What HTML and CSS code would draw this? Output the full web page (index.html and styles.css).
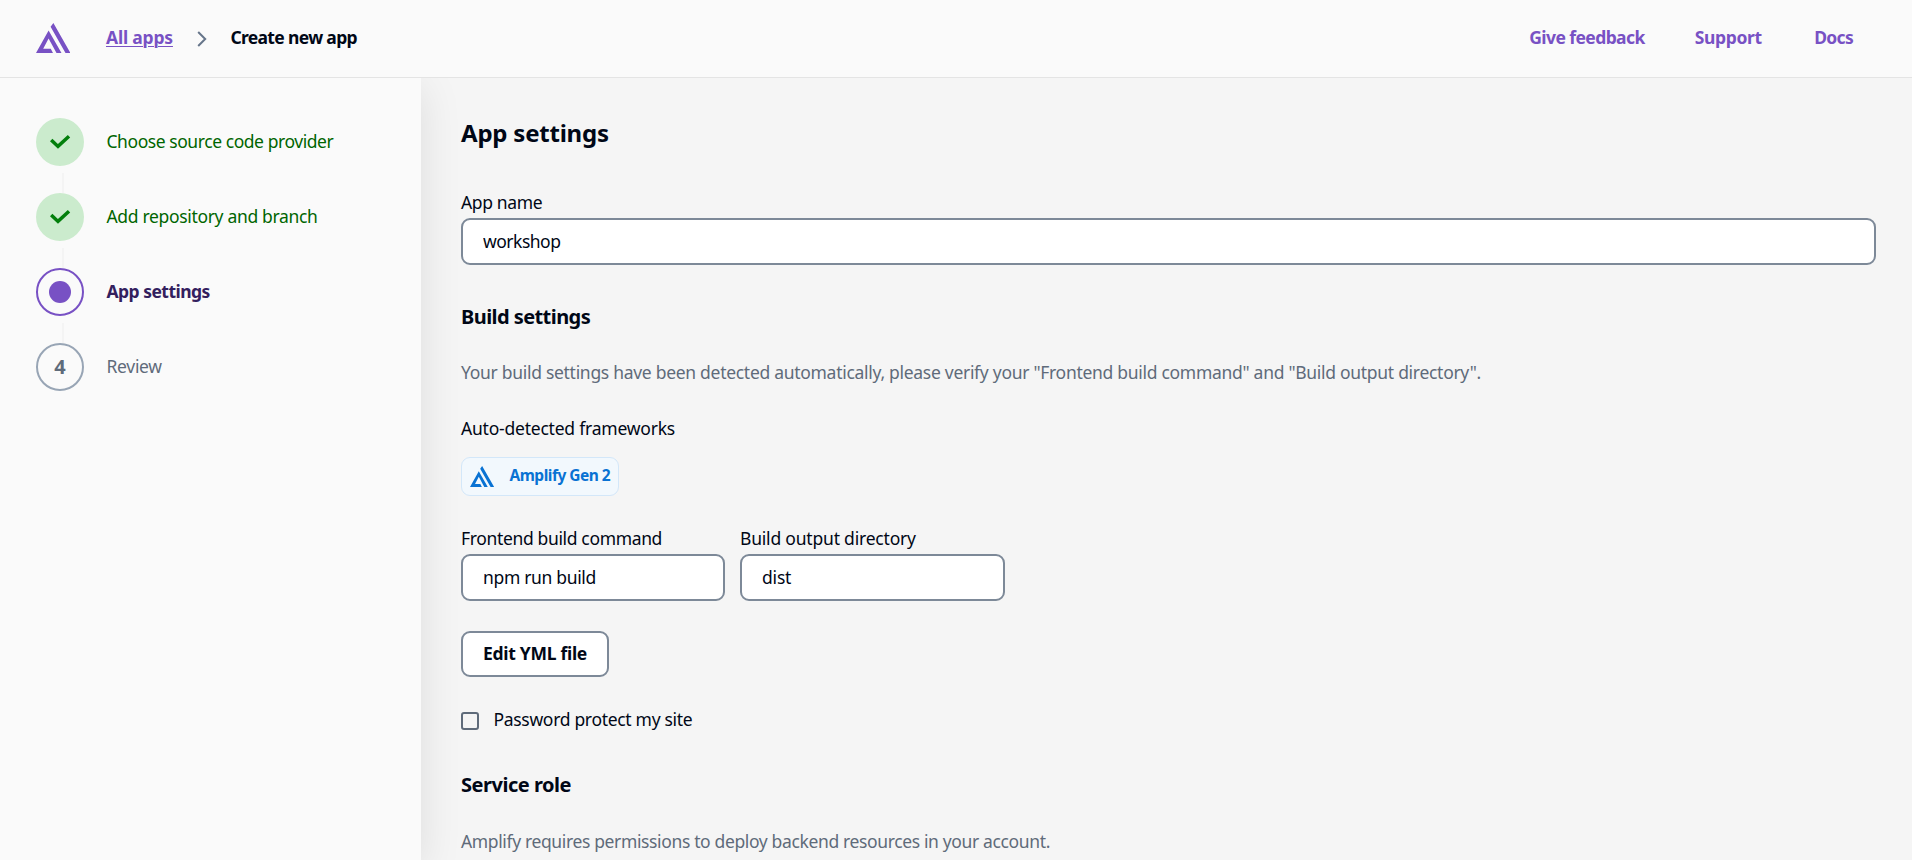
FILE: index.html
```html
<!DOCTYPE html>
<html lang="en">
<head>
<meta charset="utf-8">
<title>Create new app</title>
<link rel="stylesheet" href="styles.css">
</head>
<body>
<svg class="defs" aria-hidden="true">
  <symbol id="logo" viewBox="0 0 34.4 30">
    <path d="M17.4 0L34.5 30h-5L14.6 3.8zM12.6 7.6L25.5 30h-5L12.6 15.5 7.2 25.8h7.6L17 30H0z"/>
  </symbol>
</svg>
<header class="topbar">
  <svg class="topbar-logo"><use href="#logo"/></svg>
  <nav class="crumbs">
    <a class="crumb-link t-link">All apps</a>
    <svg class="chevron" viewBox="0 0 10 16"><path d="M1.2 1l7 7-7 7"/></svg>
    <span class="crumb-current">Create new app</span>
  </nav>
  <nav class="toplinks">
    <a class="toplink t-feedback">Give feedback</a>
    <a class="toplink t-support">Support</a>
    <a class="toplink t-docs">Docs</a>
  </nav>
</header>
<div class="layout">
  <aside class="sidebar">
    <ol class="steps">
      <li class="step done"><span class="badge"><svg class="check" viewBox="0 0 20 14"><path d="M1.2 5l6.8 6.4L19 1.3"/></svg></span><span class="step-label t-choose">Choose source code provider</span></li>
      <li class="step done"><span class="badge"><svg class="check" viewBox="0 0 20 14"><path d="M1.2 5l6.8 6.4L19 1.3"/></svg></span><span class="step-label t-repo">Add repository and branch</span></li>
      <li class="step current"><span class="badge"><span class="dot"></span></span><span class="step-label t-current">App settings</span></li>
      <li class="step todo"><span class="badge">4</span><span class="step-label t-review">Review</span></li>
    </ol>
  </aside>
  <main class="main">
    <h1 class="title">App settings</h1>
    <div class="field field-name">
      <label class="label t-name" for="name">App name</label>
      <input class="input t-workshop" id="name" value="workshop">
    </div>
    <h2 class="section t-build">Build settings</h2>
    <p class="hint t-hint">Your build settings have been detected automatically, please verify your "Frontend build command" and "Build output directory".</p>
    <div class="label t-auto">Auto-detected frameworks</div>
    <div class="chip"><svg class="chip-logo"><use href="#logo"/></svg><span>Amplify Gen 2</span></div>
    <div class="row">
      <div class="field">
        <label class="label t-front" for="cmd">Frontend build command</label>
        <input class="input t-npm" id="cmd" value="npm run build">
      </div>
      <div class="field">
        <label class="label t-out" for="dir">Build output directory</label>
        <input class="input t-out" id="dir" value="dist">
      </div>
    </div>
    <button class="button">Edit YML file</button>
    <label class="checkline"><span class="box"></span><span>Password protect my site</span></label>
    <h2 class="section t-role">Service role</h2>
    <p class="hint t-perm">Amplify requires permissions to deploy backend resources in your account.</p>
  </main>
</div>
</body>
</html>
```
FILE: styles.css
```css
* { box-sizing: border-box; }
body {
  margin: 0;
  height: 860px;
  overflow: hidden;
  display: flex;
  flex-direction: column;
  background: #f5f5f5;
  color: #000716;
  font: 400 17.5px/27px "Noto Sans", "Open Sans", sans-serif;
  white-space: nowrap;
}
h1, h2, p, ol { margin: 0; padding: 0; }
.defs { position: absolute; width: 0; height: 0; }

.topbar {
  position: relative;
  z-index: 1;
  flex: none;
  height: 78px;
  padding: 0 59px 3px 36px;
  display: flex;
  align-items: center;
  background: #fafafa;
  border-bottom: 1px solid #e4e4e4;
  font-weight: 700;
}
.topbar-logo { width: 34.4px; height: 30px; margin: 2px 35.6px 0 0; fill: #7851c4; }
.crumbs { display: flex; align-items: center; }
.crumb-link {
  width: 67px;
  color: #7851c4;
  text-decoration: underline;
  text-decoration-thickness: 1px;
  text-underline-offset: 2px;
}
.chevron { width: 10px; height: 16px; margin: 3px 23px 0 24.4px; fill: none; stroke: #66758a; stroke-width: 2; }
.crumb-current { letter-spacing: -0.66px; }
.toplinks { margin-left: auto; display: flex; color: #7851c4; }
.toplink { margin-left: 50px; }

.layout { flex: 1; min-height: 0; display: flex; }
.sidebar {
  flex: none;
  width: 421px;
  padding: 40px 36px;
  background: #fafafa;
  box-shadow: 0 9px 40px rgba(0, 0, 0, .1);
}
.steps { list-style: none; display: flex; flex-direction: column; gap: 27px; }
.step { position: relative; display: flex; align-items: center; gap: 22.5px; }
.step:not(:last-child)::after {
  content: "";
  position: absolute;
  left: 26px;
  top: 55px;
  width: 2px;
  height: 20px;
  background: #f4f4f4;
}
.step-label { padding-bottom: 2px; }
.badge {
  width: 48px;
  height: 48px;
  display: flex;
  align-items: center;
  justify-content: center;
  border-radius: 50%;
  font-size: 20px;
  font-weight: 700;
}
.done { color: #006500; }
.done .badge { background: #cbebcd; }
.check { width: 20px; height: 14px; overflow: visible; fill: none; stroke: #037f0c; stroke-width: 3.5; }
.current { color: #33205e; font-weight: 700; }
.current .badge { border: 2px solid #7851c4; }
.dot { width: 22px; height: 22px; border-radius: 50%; background: #7851c4; }
.todo { color: #5f6b7a; }
.todo .badge { border: 2px solid #98a5b5; padding-bottom: 2px; }

.main { flex: 1; padding: 39px 36px 0 40px; display: flex; flex-direction: column; align-items: flex-start; }
.title { font-size: 24px; line-height: 32px; letter-spacing: -0.22px; }
.field { display: flex; flex-direction: column; }
.field-name { align-self: stretch; margin-top: 40px; }
.label { height: 29px; line-height: 27px; }
.input {
  width: 100%;
  height: 47px;
  padding: 0 20px 2px;
  border: 2px solid #7d8998;
  border-radius: 9px;
  background: #fff;
  color: #000716;
  font: inherit;
}
.section { margin-top: 37px; font-size: 20px; line-height: 30px; }
.hint { margin-top: 27px; color: #5f6b7a; }
.t-auto { margin-top: 29px; }
.chip {
  height: 39px;
  width: 158px;
  margin-top: 13px;
  padding: 0 0 2px 8px;
  display: flex;
  align-items: center;
  gap: 15.5px;
  border: 1px solid #d3e7f9;
  border-radius: 9px;
  background: #f2f8fd;
  color: #0972d3;
  font-size: 15.5px;
  font-weight: 700;
  letter-spacing: -0.5px;
}
.chip-logo { width: 24px; height: 21px; margin-top: 2px; fill: #0972d3; }
.row { margin-top: 29px; display: grid; grid-template-columns: 264px 265px; gap: 15px; }
.button {
  width: 148px;
  height: 46px;
  margin-top: 30px;
  padding: 0 0 2px;
  border: 2px solid #7d8998;
  border-radius: 9px;
  background: #fff;
  color: #000716;
  font: inherit;
  font-weight: 700;
  letter-spacing: -0.28px;
}
.checkline { margin-top: 29px; display: flex; align-items: center; gap: 14.5px; letter-spacing: -0.31px; }
.box { width: 18px; height: 18px; margin-top: 2px; border: 2px solid #5f6b7a; border-radius: 3px; }
.t-role { margin-top: 37px; }
.t-perm { margin-top: 28px; }

.t-link { letter-spacing: -0.19px; }
.t-feedback { letter-spacing: -0.58px; }
.t-support { letter-spacing: -0.36px; }
.t-docs { letter-spacing: -0.7px; margin-left: 52.5px; }
.t-choose { letter-spacing: -0.44px; }
.t-repo { letter-spacing: -0.33px; }
.t-current { letter-spacing: -0.53px; }
.t-review { letter-spacing: -0.3px; }
.t-name { letter-spacing: -0.36px; }
.t-workshop { letter-spacing: -0.5px; }
.t-build { letter-spacing: -0.57px; }
.t-hint { letter-spacing: -0.292px; }
.t-auto { letter-spacing: -0.215px; }
.t-front { letter-spacing: -0.35px; }
.t-npm { letter-spacing: -0.33px; }
.t-out { letter-spacing: -0.2px; }
.t-role { letter-spacing: -0.47px; }
.t-perm { letter-spacing: -0.364px; }
```
